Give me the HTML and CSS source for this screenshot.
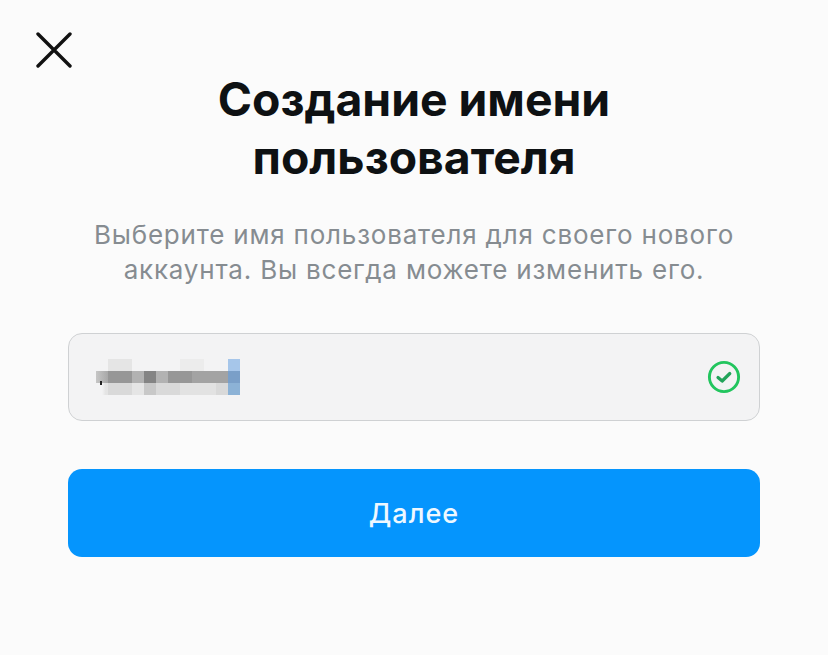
FILE: index.html
```html
<!DOCTYPE html>
<html lang="ru">
<head>
    <meta charset="UTF-8" />
    <title>Создание имени пользователя</title>
    <link rel="stylesheet" href="styles.css">
</head>
<body>
    <div class="page">
        <div class="top">
            <svg class="close" width="36" height="36" viewBox="0 0 36 36" fill="none" stroke="#111" stroke-width="3.4" stroke-linecap="round">
                <path d="M2 2 L34 34 M34 2 L2 34"/>
            </svg>
        </div>
        <h1 class="title">Создание имени<br>пользователя</h1>
        <p class="sub">Выберите имя пользователя для своего нового<br>аккаунта. Вы всегда можете изменить его.</p>
        <div class="field">
            <div class="blur">
                <i></i><i class="l2"></i><i class="l2"></i><i></i><i></i><i></i><i></i><i class="l1"></i><i class="l1"></i><i></i><i></i><i class="b1"></i>
                <i class="d0"></i><i class="d1"></i><i class="d1"></i><i class="d3"></i><i class="d4"></i><i class="d3"></i><i class="d1"></i><i class="d1"></i><i class="d2"></i><i class="d2"></i><i class="d2"></i><i class="b2"></i>
                <i class="m0"></i><i class="m2"></i><i class="m2"></i><i class="l2"></i><i class="m1"></i><i class="m2"></i><i class="m2"></i><i class="m3"></i><i class="m3"></i><i class="m3"></i><i class="m2"></i><i class="b3"></i>
            </div>
            <svg class="ok" width="34" height="34" viewBox="0 0 34 34" fill="none" stroke="#22c55e" stroke-linecap="round" stroke-linejoin="round">
                <circle cx="17" cy="17" r="14.6" stroke-width="2.9"/>
                <path d="M11 17.5 L15.2 21 L22.8 13.5" stroke="#22a35a" stroke-width="3.2"/>
            </svg>
        </div>
        <button class="next">Далее</button>
    </div>
</body>
</html>
```

FILE: styles.css
```css
*{
    margin: 0;
    padding: 0;
    box-sizing: border-box;
}

html,body{
    width: 100%;
    height: 100%;
}
body{
    background-color: #fbfbfb;
    font-family: Inter, "Noto Sans", sans-serif;
    overflow: hidden;
}

.page{
    padding: 32px 68px 0;
    text-align: center;
}

.top{
    height: 36px;
    margin-left: -32px;
}
.close{
    display: block;
}

.title{
    margin-top: 2px;
    font-size: 46.3px;
    line-height: 58px;
    font-weight: 700;
    color: #0e1113;
}

.sub{
    margin-top: 31px;
    font-size: 26px;
    line-height: 35px;
    letter-spacing: 0.8px;
    color: #868c91;
}

.field{
    display: flex;
    align-items: center;
    justify-content: space-between;
    height: 88px;
    margin-top: 46px;
    padding: 0 18px 0 27px;
    background-color: #f3f3f4;
    border: 1px solid #cfd1d3;
    border-radius: 14px;
}
.blur{
    display: grid;
    grid-template-columns: repeat(12, 12px);
    grid-auto-rows: 12px;
}
.blur .l1{ background: #ececec; }
.blur .l2{ background: #e5e5e5; }
.blur .m0{ background: linear-gradient(90deg, transparent 50%, #e4e4e4 80%); }
.blur .m1{ background: #c8c8c8; }
.blur .m2{ background: #d9d9d9; }
.blur .m3{ background: #e2e2e2; }
.blur .d0{
    position: relative;
    background: linear-gradient(90deg, #c6c6c6, #a8a8a8);
}
.blur .d0::after{
    content: "";
    position: absolute;
    left: 4px;
    top: 10px;
    width: 2px;
    height: 4px;
    background: #222;
}
.blur .d1{ background: #979797; }
.blur .d2{ background: #a3a3a3; }
.blur .d3{ background: #b2b2b2; }
.blur .d4{ background: #848484; }
.blur .b1{ background: #a6c6ea; }
.blur .b2{ background: #7a9fc8; }
.blur .b3{ background: #8cb2d6; }

.next{
    display: block;
    width: 100%;
    height: 88px;
    margin-top: 48px;
    border: none;
    border-radius: 14px;
    background-color: #0595fd;
    color: #eef8ff;
    font-family: inherit;
    font-size: 27px;
    font-weight: 550;
    letter-spacing: 1px;
}
```
